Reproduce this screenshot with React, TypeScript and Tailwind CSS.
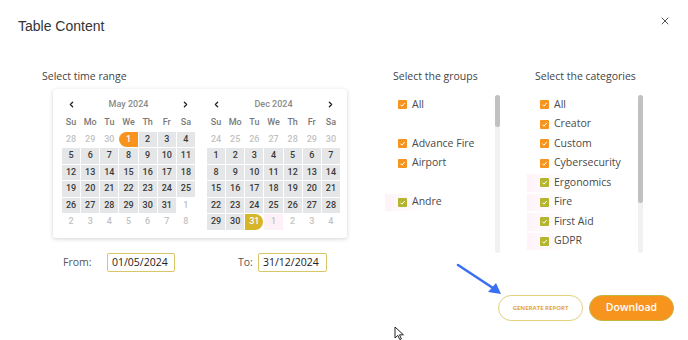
import React from "react";
import { X, ChevronLeft, ChevronRight } from "lucide-react";

type Day = { n: number; out?: boolean; start?: boolean; end?: boolean; pink?: boolean };

const DAY_NAMES = ["Su", "Mo", "Tu", "We", "Th", "Fr", "Sa"];

const range = (a: number, b: number, extra: Partial<Day> = {}): Day[] =>
  Array.from({ length: b - a + 1 }, (_, i) => ({ n: a + i, ...extra }));

const mayDays: Day[] = [
  ...range(28, 30, { out: true }),
  { n: 1, start: true },
  ...range(2, 31),
  ...range(1, 8, { out: true }),
];

const decDays: Day[] = [
  ...range(24, 30, { out: true }),
  ...range(1, 30),
  { n: 31, end: true },
  { n: 1, out: true, pink: true },
  ...range(2, 4, { out: true }),
];

const groups = [
  { label: "All", color: "orange" },
  null,
  { label: "Advance Fire", color: "orange" },
  { label: "Airport", color: "orange" },
  null,
  { label: "Andre", color: "olive" },
  null,
  null,
];

const categories = [
  { label: "All", color: "orange" },
  { label: "Creator", color: "orange" },
  { label: "Custom", color: "orange" },
  { label: "Cybersecurity", color: "orange" },
  { label: "Ergonomics", color: "olive" },
  { label: "Fire", color: "olive" },
  { label: "First Aid", color: "olive" },
  { label: "GDPR", color: "olive" },
];

const MonthView = ({ title, days }: { title: string; days: Day[] }) => (
  <div className="w-[133px]">
    <div className="grid grid-cols-7 h-[17px] items-center text-[9px] font-medium">
      <span className="flex justify-center text-[#222]">
        <ChevronLeft size={9} strokeWidth={3.5} />
      </span>
      <span className="col-span-5 text-center text-[#8a8a8a]">{title}</span>
      <span className="flex justify-center text-[#222]">
        <ChevronRight size={9} strokeWidth={3.5} />
      </span>
    </div>
    <div className="grid grid-cols-7 gap-px mt-[2px]">
      {DAY_NAMES.map((d) => (
        <span key={d} className="h-[15.5px] flex items-center justify-center text-[9px] font-medium text-[#7a7a7a]">
          {d}
        </span>
      ))}
      {days.map((d, i) => {
        let cls = "bg-[#e4e6e7] text-[#3a3a3a]";
        if (d.out) cls = d.pink ? "bg-[#fdf1f7] text-[#c2c2c2]" : "text-[#c2c2c2]";
        if (d.start) cls = "bg-[#f7941d] text-white rounded-l-full";
        if (d.end) cls = "bg-[#d6b527] text-white rounded-r-full";
        return (
          <span
            key={i}
            className={`h-[15.5px] flex items-center justify-center text-[9px] font-medium ${cls}`}
          >
            {d.n}
          </span>
        );
      })}
    </div>
  </div>
);

const Check = ({ color }: { color: string }) => (
  <span
    className={`w-[9px] h-[9px] flex items-center justify-center rounded-[1px] ${
      color === "orange" ? "bg-[#f7941d]" : "bg-[#b4b52c]"
    }`}
  >
    <svg width="7" height="7" viewBox="0 0 10 10">
      <path d="M2 5.2 L4.2 7.4 L8.2 2.8" stroke="white" strokeWidth="1.4" fill="none" />
    </svg>
  </span>
);

const ListBox = ({
  items,
  width,
  thumb,
}: {
  items: ({ label: string; color: string } | null)[];
  width: string;
  thumb: string;
}) => (
  <div className={`flex h-[158px] mt-[12px] ${width}`}>
    <div className="flex-1 flex flex-col">
      {items.map((it, i) => (
        <div key={i} className="h-[19.5px] flex items-center gap-[5px] pl-[5px] relative">
          {it && it.color === "olive" && (
            <span className="absolute left-[-8px] top-[1px] bottom-[1px] w-[40px] bg-gradient-to-r from-[#fdf3f8] to-transparent" />
          )}
          {it && (
            <>
              <span className="relative">
                <Check color={it.color} />
              </span>
              <span className="relative text-[10.5px] text-[#4a4a4a]">{it.label}</span>
            </>
          )}
        </div>
      ))}
    </div>
    <div className="w-[5px] h-full rounded-full bg-[#f1f1f1] flex flex-col">
      <div className={`w-full rounded-full bg-[#c1c1c1] ${thumb}`} />
    </div>
  </div>
);

export default function App() {
  return (
    <div
      className="w-[688px] h-[340px] bg-white relative overflow-hidden"
      style={{ fontFamily: '"Open Sans", "Noto Sans", sans-serif' }}
    >
      <div className="flex justify-between items-start pt-[17px] pl-[18px] pr-[17px]">
        <h1
          className="text-[14px] leading-[18px] text-[#333]"
          style={{ fontFamily: '"Liberation Sans", Arial, sans-serif' }}
        >
          Table Content
        </h1>
        <X size={12} strokeWidth={2} className="text-[#555] mt-[-2px]" />
      </div>

      <div className="flex pl-[42px] mt-[34px]">
        <div className="w-[351px]">
          <div className="text-[10.5px] leading-[14px] text-[#444]">Select time range</div>
          <div
            className="ml-[11px] mt-[6px] w-[294px] h-[149px] rounded-[3px] bg-white shadow-[0_1px_4px_rgba(0,0,0,0.18)] flex gap-[12px] pl-[9px] pt-[7px]"
            style={{ fontFamily: 'Roboto, "Liberation Sans", Arial, sans-serif' }}
          >
            <MonthView title="May 2024" days={mayDays} />
            <MonthView title="Dec 2024" days={decDays} />
          </div>
          <div className="flex items-center mt-[15px] h-[19px] text-[10.5px]">
            <span className="ml-[21px] w-[44px] text-[#555]">From:</span>
            <div className="w-[68px] h-[19px] border border-[#d8c766] rounded-[2px] flex items-center pl-[4px] text-[#222]">
              01/05/2024
            </div>
            <span className="ml-[63px] w-[20px] text-[#555]">To:</span>
            <div className="w-[69px] h-[19px] border border-[#d8c766] rounded-[2px] flex items-center pl-[4px] text-[#222]">
              31/12/2024
            </div>
          </div>
        </div>

        <div className="w-[142px]">
          <div className="text-[10.5px] leading-[14px] text-[#444]">Select the groups</div>
          <ListBox items={groups} width="w-[107px]" thumb="h-[32px]" />
        </div>

        <div>
          <div className="text-[10.5px] leading-[14px] text-[#444]">Select the categories</div>
          <ListBox items={categories} width="w-[108px]" thumb="h-[108px]" />
        </div>
      </div>

      <div className="flex justify-end gap-[6px] pr-[14px] mt-[23px]">
        <button className="w-[85px] h-[26px] rounded-full border border-[#e2d27a] bg-white text-[6px] font-bold text-[#e3a640] uppercase">
          Generate Report
        </button>
        <button className="w-[85px] h-[26px] rounded-full border border-[#c7b43a] bg-[#f7941d] text-[10.5px] font-semibold text-white">
          Download
        </button>
      </div>

      <svg className="absolute left-[452px] top-[259px]" width="56" height="42" viewBox="0 0 56 42">
        <line x1="6" y1="6" x2="44" y2="31" stroke="#3b6ff2" strokeWidth="2.6" strokeLinecap="round" />
        <path d="M49 35 L36 33 L44 24 Z" fill="#3b6ff2" />
      </svg>

      <svg className="absolute left-[394px] top-[326px]" width="12" height="15" viewBox="0 0 12 15">
        <path d="M1 1 L1 12 L3.8 9.4 L5.8 13.6 L7.4 12.9 L5.5 8.8 L9.4 8.8 Z" fill="white" stroke="#222" strokeWidth="1" />
      </svg>
    </div>
  );
}
